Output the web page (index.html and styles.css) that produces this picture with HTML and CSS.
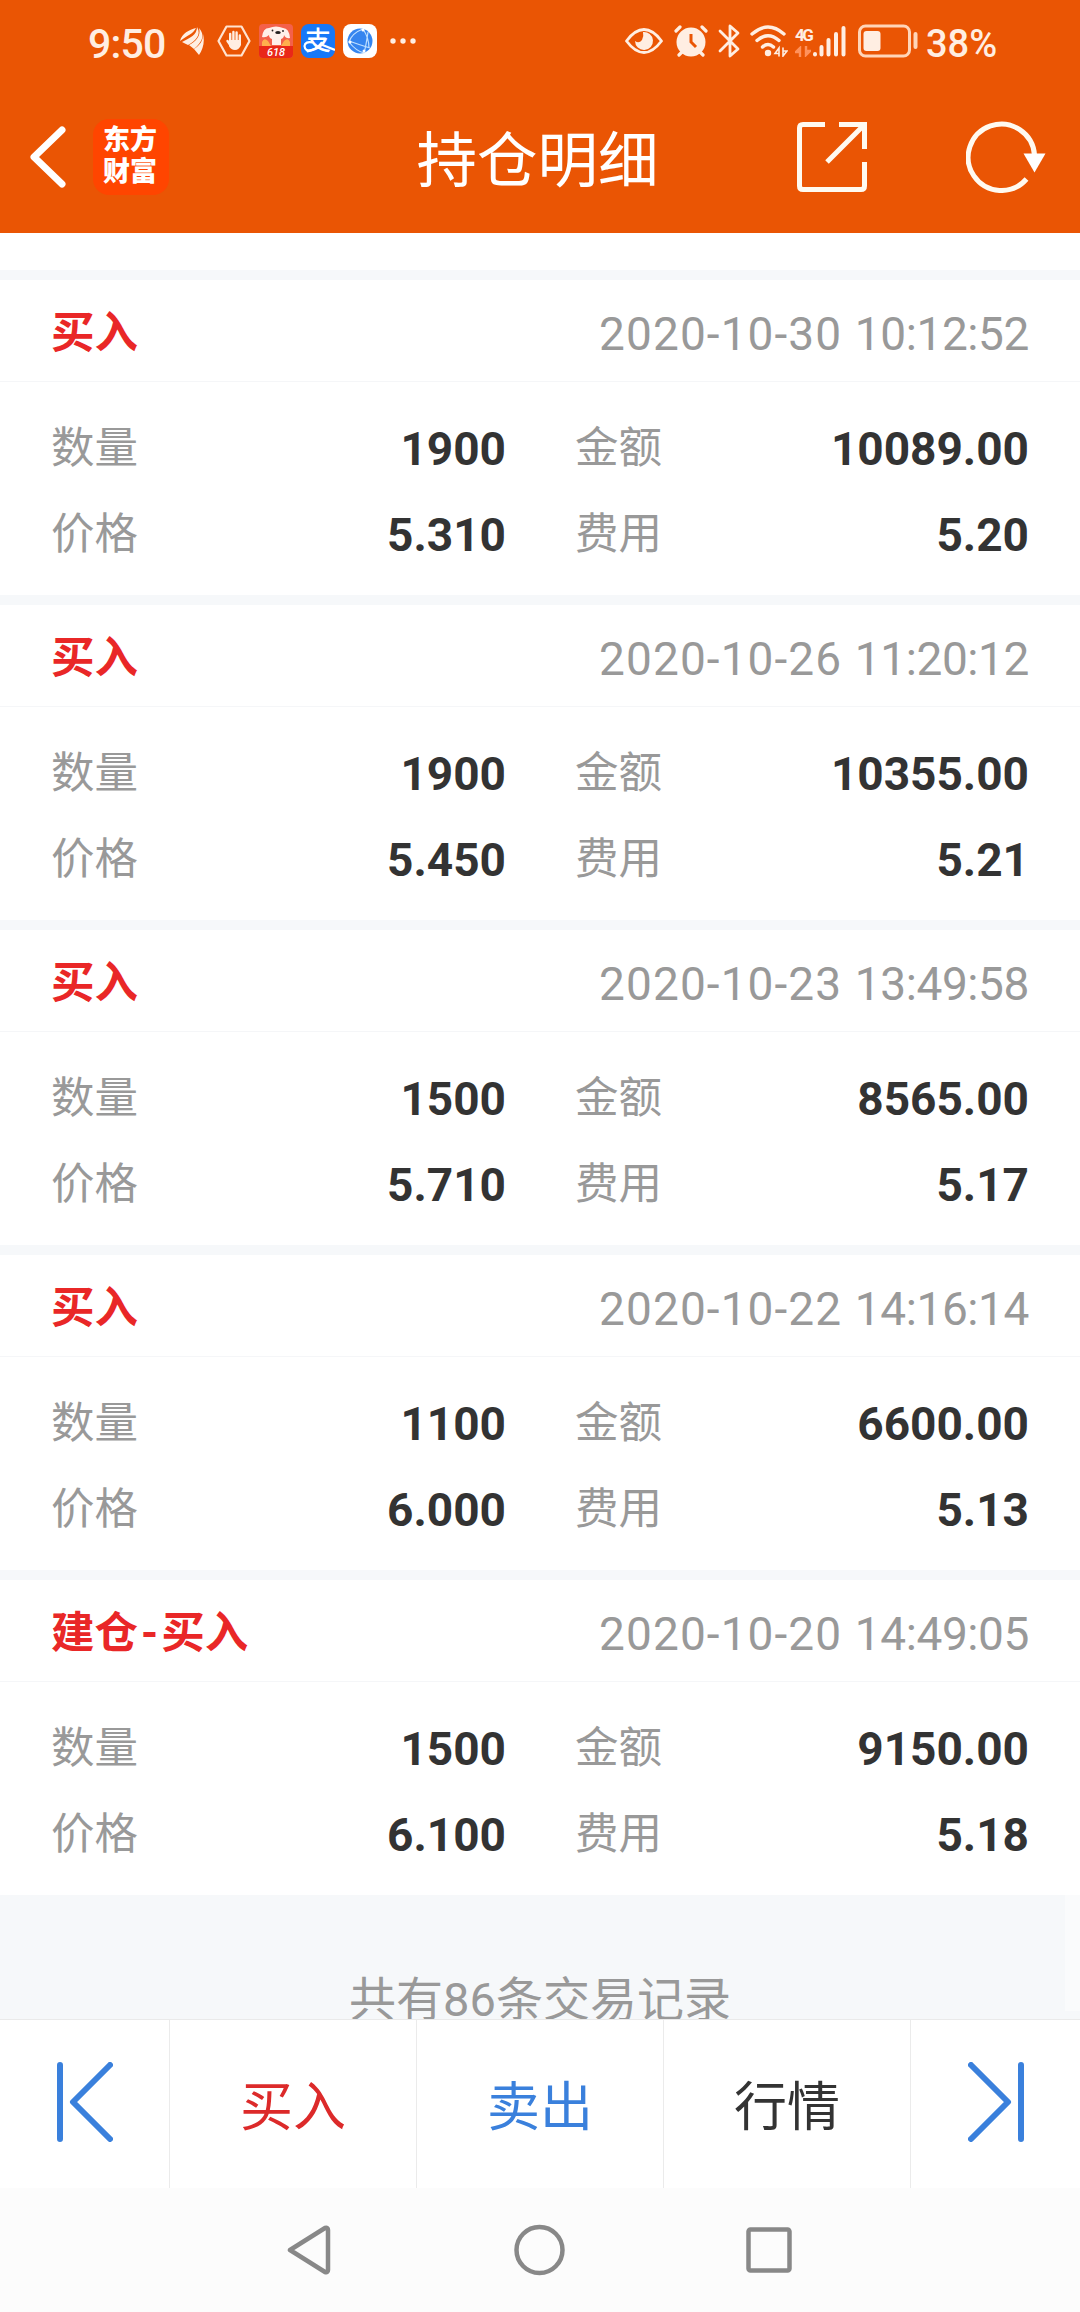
FILE: index.html
```html
<!DOCTYPE html>
<html lang="zh-CN">

<head>
  <meta charset="UTF-8">
  <meta name="viewport" content="width=device-width, initial-scale=1.0">
  <title>持仓明细</title>
  <link rel="stylesheet" href="styles.css">
</head>

<body>

  <header>
    <div class="status-bar">
      <div class="status-left">
        <span class="time">9:50</span>
        <svg class="icon-wing" width="24" height="28" viewBox="0 0 24 28" fill="#ffeee2">
          <path d="M0 14C2 6 9 3 16 1C13 7 8 8 0 14Z" />
          <path d="M2 15C10 11 17 8 17 0C22 8 15 14 8 18Z" />
          <path d="M9 18C17 14 21 8 19 1C25 8 23 14 14 22Z" />
          <path d="M14 22C20 18 23 14 23 7C25 15 23 22 19 28Z" />
        </svg>
        <svg class="icon-hand" width="34" height="32" viewBox="0 0 34 32" fill="none" stroke="#ffe3d0" stroke-width="2.2" stroke-linejoin="round">
          <path d="M9.5 1.5H24.5L32.5 16L24.5 30.5H9.5L1.5 16Z" />
          <path d="M13.2 9V16M16.4 7V16M19.6 7.5V16M22.8 10.5V18M10.500 16L14 21" stroke="#ffeee2" stroke-width="2.4" stroke-linecap="round" />
          <path d="M12 15H24V20Q22 25 18 25Q14 25 12 21Z" fill="#ffeee2" stroke="none" />
        </svg>
        <svg class="icon-app" width="34" height="34" viewBox="0 0 34 34">
          <rect width="34" height="34" rx="4" fill="#f4604a" />
          <path d="M3 18Q5 13 9 17L12 22H3ZM31 18Q29 13 25 17L22 22H31Z" fill="#ffb04d" />
          <path d="M10 4Q17 1 24 4Q30 4 31 14Q27 15 25 11Q25 14 22 15V21H13V15Q10 14 10 11Q7 14 3 13Q4 4 10 4Z" fill="#fff0ea" />
          <ellipse cx="19" cy="8.500" rx="2.800" ry="1.500" fill="#252020" />
          <circle cx="13.500" cy="6.500" r="0.900" fill="#252020" /><circle cx="24" cy="7" r="0.900" fill="#252020" />
          <path d="M0 22H34V30Q34 34 30 34H4Q0 34 0 30Z" fill="#e92818" />
          <text x="17" y="32" class="sale-text">618</text>
        </svg>
        <svg class="icon-app" width="34" height="34" viewBox="0 0 34 34">
          <rect width="34" height="34" rx="8" fill="#1778f8" />
          <text x="17" y="26" class="pay-text">支</text>
          <path d="M12 18.500Q4 17 3.500 22Q4 28 11 26Q17 24 21 18M19 20L34 26" fill="none" stroke="#fff" stroke-width="2.2" />
        </svg>
        <svg class="icon-app" width="34" height="34" viewBox="0 0 34 34">
          <rect width="34" height="34" rx="8" fill="#fff" />
          <circle cx="17" cy="17" r="12.5" fill="#3585ef" />
          <path d="M20 5Q9 9 6 18Q13 27 21 29M20 5Q26 14 26 24M6 17Q17 21 27 24M25 8Q23 22 21 29" fill="none" stroke="#bfe0ff" stroke-width="1.2" />
          <circle cx="20" cy="6" r="1.5" fill="#fff" /><circle cx="7" cy="18" r="1.5" fill="#fff" /><circle cx="21" cy="27" r="1.5" fill="#fff" />
        </svg>
        <svg class="icon-dots" width="26" height="6" viewBox="0 0 26 6" fill="#ffeee2">
          <circle cx="3" cy="3" r="2.7" /><circle cx="13" cy="3" r="2.7" /><circle cx="23" cy="3" r="2.7" />
        </svg>
      </div>
      <div class="status-right">
        <svg class="icon-eye" width="38" height="28" viewBox="0 0 38 28">
          <path d="M1.5 14Q10 2.5 19 2.5Q28 2.5 36.5 14Q28 25.5 19 25.5Q10 25.5 1.5 14Z" fill="none" stroke="#ffeee2" stroke-width="2.8" stroke-linejoin="round" />
          <path d="M18 5A9 9 0 1 1 10 14Q14 17 17 13Q19 9 18 5Z" fill="#ffeee2" />
        </svg>
        <svg class="icon-alarm" width="34" height="32" viewBox="0 0 34 32">
          <circle cx="17" cy="17" r="14.5" fill="#ffeee2" />
          <path d="M2 6L6 2M32 6L28 2M5 30L8 27M29 30L26 27" stroke="#ffeee2" stroke-width="3.2" stroke-linecap="round" />
          <path d="M17 9V17L22 22" fill="none" stroke="#ea5504" stroke-width="3" />
        </svg>
        <svg class="icon-bluetooth" width="22" height="34" viewBox="0 0 22 34" fill="none" stroke="#ffeee2" stroke-width="2.8" stroke-linejoin="round" stroke-linecap="round">
          <path d="M2 7L20 25L12 32V2L20 9L2 27" />
        </svg>
        <svg class="icon-wifi" width="38" height="32" viewBox="0 0 38 32" fill="none" stroke="#ffeee2" stroke-width="3.4" stroke-linecap="round">
          <path d="M2 9Q18 -5 34 9M7 15.5Q18 6 29 15.5M12.5 22Q18 17 23.5 22" />
          <circle cx="18" cy="28" r="3.2" fill="#ffeee2" stroke="none" />
          <path d="M29 31V23L25 28.5H29M33 23V31L37 26H33" stroke-width="1.6" />
        </svg>
        <div class="network">
          <span>4G</span>
          <svg width="16" height="11" viewBox="0 0 16 11" fill="none" stroke="#ff925c" stroke-width="2.4">
            <path d="M5 11V2L1 6H5M11 0V9L15 5H11" />
          </svg>
        </div>
        <svg class="icon-signal" width="34" height="32" viewBox="0 0 34 32" stroke="#ffeee2" stroke-width="4" stroke-linecap="round">
          <path d="M3 29V29.5M9.500 22V29.5M16.500 15V29.5M24 9V29.5M31.5 3V29.5" />
        </svg>
        <svg class="icon-battery" width="60" height="34" viewBox="0 0 60 34">
          <rect x="1.5" y="2" width="50" height="30" rx="6" fill="none" stroke="#ffd5b8" stroke-width="3" />
          <rect x="5.5" y="7" width="17" height="20" rx="3" fill="#ffeee2" />
          <path d="M57.5 10V23" stroke="#ffd5b8" stroke-width="4" stroke-linecap="round" />
        </svg>
        <span class="percent">38%</span>
      </div>
    </div>

    <div class="title-bar">
      <div class="title-left">
        <svg width="38" height="62" viewBox="0 0 38 62" fill="none" stroke="#fff" stroke-width="7" stroke-linecap="round" stroke-linejoin="round">
          <path d="M33 4L5 31L33 58" />
        </svg>
        <div class="logo">东方<br>财富</div>
      </div>
      <h1>持仓明细</h1>
      <div class="title-right">
        <svg width="72" height="72" viewBox="0 0 72 72" fill="none" stroke="#fffaf0" stroke-width="5">
          <path d="M29 3.5H7Q3.5 3.5 3.5 7V65Q3.5 68.5 7 68.5H65Q68.5 68.5 68.5 65V41M43 3.5H68.5V28M68 4L31 41" />
        </svg>
        <svg width="80" height="72" viewBox="0 0 80 72" fill="none" stroke="#fffaf0" stroke-width="5">
          <path d="M60.5 58A33.2 33.2 0 1 1 68.5 34" />
          <path d="M57.5 32.5H79.5L68.5 51.5Z" fill="#fff" stroke="none" />
        </svg>
      </div>
    </div>
  </header>

  <main>
    <div class="card">
      <div class="card-head"><span class="type">买入</span><span class="date">2020-10-30 <span class="clock">10:12:52</span></span></div>
      <div class="card-body">
        <span class="label">数量</span><span class="value">1900</span>
        <span class="label">金额</span><span class="value">10089.00</span>
        <span class="label">价格</span><span class="value">5.310</span>
        <span class="label">费用</span><span class="value">5.20</span>
      </div>
    </div>

    <div class="card">
      <div class="card-head"><span class="type">买入</span><span class="date">2020-10-26 <span class="clock">11:20:12</span></span></div>
      <div class="card-body">
        <span class="label">数量</span><span class="value">1900</span>
        <span class="label">金额</span><span class="value">10355.00</span>
        <span class="label">价格</span><span class="value">5.450</span>
        <span class="label">费用</span><span class="value">5.21</span>
      </div>
    </div>

    <div class="card">
      <div class="card-head"><span class="type">买入</span><span class="date">2020-10-23 <span class="clock">13:49:58</span></span></div>
      <div class="card-body">
        <span class="label">数量</span><span class="value">1500</span>
        <span class="label">金额</span><span class="value">8565.00</span>
        <span class="label">价格</span><span class="value">5.710</span>
        <span class="label">费用</span><span class="value">5.17</span>
      </div>
    </div>

    <div class="card">
      <div class="card-head"><span class="type">买入</span><span class="date">2020-10-22 <span class="clock">14:16:14</span></span></div>
      <div class="card-body">
        <span class="label">数量</span><span class="value">1100</span>
        <span class="label">金额</span><span class="value">6600.00</span>
        <span class="label">价格</span><span class="value">6.000</span>
        <span class="label">费用</span><span class="value">5.13</span>
      </div>
    </div>

    <div class="card">
      <div class="card-head"><span class="type">建仓<span class="dash">-</span>买入</span><span class="date">2020-10-20 <span class="clock">14:49:05</span></span></div>
      <div class="card-body">
        <span class="label">数量</span><span class="value">1500</span>
        <span class="label">金额</span><span class="value">9150.00</span>
        <span class="label">价格</span><span class="value">6.100</span>
        <span class="label">费用</span><span class="value">5.18</span>
      </div>
    </div>

    <div class="total">
      <p>共有86条交易记录</p>
      <div class="scrollbar"></div>
    </div>
  </main>

  <div class="toolbar">
    <a href="#">
      <svg width="56" height="80" viewBox="0 0 56 80" fill="none" stroke="#3a80dc" stroke-width="6" stroke-linecap="round" stroke-linejoin="round">
        <path d="M3 3V77M53 3L16 40L53 77" />
      </svg>
    </a>
    <a href="#" class="buy">买入</a>
    <a href="#" class="sell">卖出</a>
    <a href="#">行情</a>
    <a href="#">
      <svg width="56" height="80" viewBox="0 0 56 80" fill="none" stroke="#3a80dc" stroke-width="6" stroke-linecap="round" stroke-linejoin="round">
        <path d="M53 3V77M3 3L40 40L3 77" />
      </svg>
    </a>
  </div>

  <nav>
    <svg width="44" height="52" viewBox="0 0 44 52" fill="none" stroke="#888" stroke-width="4.5" stroke-linejoin="round">
      <path d="M3 26L38 4Q41 3 41 6V46Q41 49 38 48Z" />
    </svg>
    <svg width="52" height="52" viewBox="0 0 52 52" fill="none" stroke="#888" stroke-width="4.5">
      <circle cx="26.5" cy="26" r="23" />
    </svg>
    <svg width="46" height="46" viewBox="0 0 46 46" fill="none" stroke="#888" stroke-width="4.5">
      <rect x="2.5" y="2.5" width="41" height="41" rx="2" />
    </svg>
  </nav>

</body>

</html>
```

FILE: styles.css
```css
* {
  box-sizing: border-box;
}

body {
  margin: 0;
  width: 1080px;
  height: 2312px;
  display: flex;
  flex-direction: column;
  overflow: hidden;
  background-color: #fff;
  color: #333;
  font-family: Roboto, "Noto Sans CJK SC", sans-serif;
}

svg {
  display: block;
  flex: none;
}

header {
  height: 233px;
  background-color: #ea5504;
  color: #fff;
}

.status-bar {
  height: 82px;
  padding: 0 84px 0 88px;
  display: flex;
  justify-content: space-between;
}

.status-left,
.status-right {
  display: flex;
  align-items: center;
  color: #ffeee2;
}

.time {
  width: 92px;
  padding-top: 5px;
  font-size: 41px;
  font-weight: 500;
  letter-spacing: -0.8px;
  line-height: 48px;
}

.icon-hand {
  margin-left: 13px;
}

.icon-app {
  margin-left: 8px;
}

.icon-dots {
  margin-left: 13px;
}

.sale-text {
  font-size: 11px;
  font-style: italic;
  font-weight: 500;
  text-anchor: middle;
  fill: #fff;
}

.pay-text {
  font-size: 26px;
  font-weight: 500;
  text-anchor: middle;
  fill: #fff;
}

.icon-alarm {
  margin-left: 11px;
}

.icon-bluetooth {
  margin-left: 10px;
}

.icon-wifi {
  margin-left: 10px;
}

.network {
  width: 17px;
  margin-left: 7px;
}

.network span {
  display: block;
  margin-bottom: 2px;
  font-size: 17px;
  font-weight: 700;
  letter-spacing: -2.5px;
  line-height: 18px;
}

.icon-battery {
  margin-left: 12px;
}

.percent {
  width: 70px;
  margin-left: 8px;
  padding-top: 6px;
  font-size: 38px;
  font-weight: 500;
  line-height: 44px;
}

.title-bar {
  height: 151px;
  padding: 0 34px 0 29px;
  display: grid;
  grid-template-columns: 1fr auto 1fr;
}

.title-left,
.title-right {
  height: 149px;
  display: flex;
  align-items: center;
}

.title-left {
  gap: 26px;
}

.title-right {
  justify-content: flex-end;
  gap: 98px;
}

.logo {
  width: 76px;
  height: 76px;
  padding: 5px 2px 0 0;
  border-radius: 16px;
  background-color: #ff4500;
  font-size: 27px;
  font-weight: 900;
  line-height: 32px;
  text-align: center;
}

h1 {
  margin: 0;
  padding-top: 5px;
  font-size: 60.5px;
  font-weight: 400;
  line-height: 150px;
}

main {
  height: 1786px;
  padding-top: 37px;
  overflow: hidden;
}

.card {
  height: 325px;
  border-top: 10px solid #f6f8fa;
}

.card-head {
  height: 102px;
  padding: 4px 51px 0;
  display: flex;
  justify-content: space-between;
  border-bottom: 1px solid #f5f6f8;
  line-height: 100px;
}

.type {
  color: #e92727;
  font-size: 43.5px;
  font-weight: 700;
}

.dash {
  margin: 0 3px;
}

.date {
  color: #999;
  font-size: 46px;
  letter-spacing: 1.1px;
}

.clock {
  letter-spacing: -0.4px;
}

.card-body {
  padding: 24px 51px 0;
  display: grid;
  grid-template-columns: 90px 365px 90px 1fr;
  grid-auto-rows: 86px;
  line-height: 86px;
}

.card-body .label:nth-of-type(4n + 3) {
  margin-left: 69px;
}

.label {
  color: #999;
  font-size: 43.5px;
  white-space: nowrap;
}

.value {
  font-size: 46px;
  font-weight: 700;
  text-align: right;
}

.total {
  position: relative;
  height: 124px;
  background-color: #f6f8fa;
}

.total p {
  margin: 0;
  padding-top: 72px;
  color: #999;
  font-size: 47px;
  line-height: 66px;
  text-align: center;
}

.scrollbar {
  position: absolute;
  top: 0;
  right: 0;
  width: 15px;
  height: 116px;
  background-color: #fafbfc;
}

.toolbar {
  height: 169px;
  display: grid;
  grid-template-columns: 170px 247px 247px 247px 169px;
  border-top: 1px solid #eaeaea;
}

.toolbar a {
  padding-bottom: 2px;
  display: flex;
  align-items: center;
  justify-content: center;
  border-right: 1px solid #ebebeb;
  color: #333;
  font-size: 53px;
  text-decoration: none;
}

.toolbar svg {
  margin-bottom: 2px;
}

.toolbar a:last-child {
  border-right: none;
}

.toolbar .buy {
  color: #dc2a2a;
}

.toolbar .sell {
  color: #3a80dc;
}

nav {
  flex: 1;
  padding: 0 288px 0 287px;
  display: flex;
  align-items: center;
  justify-content: space-between;
  background-color: #fcfcfc;
}
```
